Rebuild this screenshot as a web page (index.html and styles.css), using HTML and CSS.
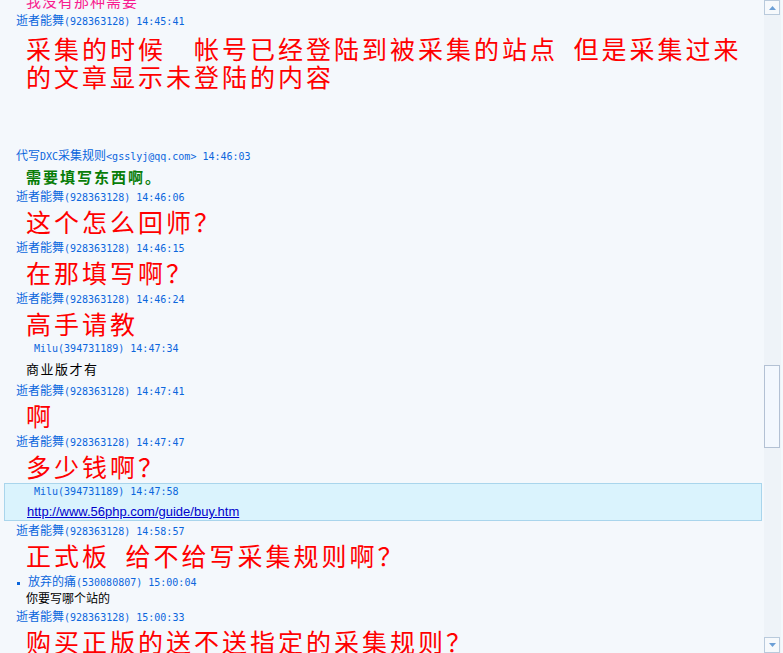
FILE: index.html
```html
<!DOCTYPE html>
<html lang="zh-CN">
  <head>
    <meta charset="UTF-8" />
    <meta name="viewport" content="width=device-width, initial-scale=1.0" />
    <title>聊天记录</title>
    <link rel="stylesheet" href="styles.css">
  </head>
  <body>
    <div class="window">
      <div class="chat">
        <p class="msg pink">我没有那种需要</p>
        <div class="hd"><span class="cn">逝者能舞</span>(928363128) 14:45:41</div>
        <p class="msg big first">采集的时候　帐号已经登陆到被采集的站点&ensp;但是采集过来的文章显示未登陆的内容</p>

        <div class="hd"><span class="cn">代写</span>DXC<span class="cn">采集规则</span>&lt;gsslyj@qq.com&gt; 14:46:03</div>
        <p class="msg green">需要填写东西啊。</p>

        <div class="hd"><span class="cn">逝者能舞</span>(928363128) 14:46:06</div>
        <p class="msg big">这个怎么回师？</p>

        <div class="hd"><span class="cn">逝者能舞</span>(928363128) 14:46:15</div>
        <p class="msg big">在那填写啊？</p>

        <div class="hd"><span class="cn">逝者能舞</span>(928363128) 14:46:24</div>
        <p class="msg big">高手请教</p>

        <div class="hd milu">Milu(394731189) 14:47:34</div>
        <p class="msg black">商业版才有</p>

        <div class="hd"><span class="cn">逝者能舞</span>(928363128) 14:47:41</div>
        <p class="msg big">啊</p>

        <div class="hd"><span class="cn">逝者能舞</span>(928363128) 14:47:47</div>
        <p class="msg big">多少钱啊？</p>

        <div class="quote">
          <div class="hd">Milu(394731189) 14:47:58</div>
          <a class="link" href="#">http://www.56php.com/guide/buy.htm</a>
        </div>

        <div class="hd"><span class="cn">逝者能舞</span>(928363128) 14:58:57</div>
        <p class="msg big">正式板&ensp;给不给写采集规则啊？</p>

        <div class="hd mark"><span class="cn">放弃的痛</span>(530080807) 15:00:04</div>
        <p class="msg plain">你要写哪个站的</p>

        <div class="hd"><span class="cn">逝者能舞</span>(928363128) 15:00:33</div>
        <p class="msg big">购买正版的送不送指定的采集规则？</p>
      </div>

      <div class="scrollbar">
        <div class="sb-btn">
          <svg width="7" height="4" viewBox="0 0 7 4"><path d="M3.5 0 L7 4 L0 4 Z" fill="#6c9fd6"/></svg>
        </div>
        <div class="sb-track">
          <div class="sb-thumb"></div>
        </div>
        <div class="sb-btn down">
          <svg width="7" height="4" viewBox="0 0 7 4"><path d="M0 0 L7 0 L3.5 4 Z" fill="#6c9fd6"/></svg>
        </div>
      </div>
    </div>
  </body>
</html>
```

FILE: styles.css
```css
* {
  margin: 0;
  padding: 0;
  box-sizing: border-box;
}

body {
  background: #f4f8fc;
  font-family: "Noto Sans CJK SC", sans-serif;
  overflow: hidden;
}

.window {
  display: flex;
  height: 653px;
  overflow: hidden;
}

.chat {
  flex: 1;
  min-width: 0;
  overflow: hidden;
}

/* sender line */
.hd {
  height: 17px;
  line-height: 17px;
  padding-left: 16px;
  color: #0b66dc;
  font-family: "DejaVu Sans Mono", "Noto Sans CJK SC", monospace;
  font-size: 10px;
  white-space: nowrap;
}

.hd .cn {
  font-family: "Noto Sans CJK SC", sans-serif;
  font-size: 12px;
}

.hd.milu {
  padding-left: 34px;
}

.hd.mark {
  padding-left: 17px;
}

.hd.mark::before {
  content: "";
  display: inline-block;
  width: 3px;
  height: 3px;
  background: #0b66dc;
  margin-right: 8px;
  vertical-align: middle;
}

/* message bodies */
.msg {
  padding-left: 26px;
  padding-right: 10px;
}

.pink {
  margin-top: -10px;
  height: 21px;
  line-height: 21px;
  font-size: 15px;
  letter-spacing: 1px;
  color: #f81d8f;
}

.big {
  font-size: 25px;
  letter-spacing: 3px;
  line-height: 28px;
  color: #ff0000;
  padding-top: 3px;
  padding-bottom: 3px;
}

.big.first {
  padding-top: 6px;
  padding-bottom: 56px;
}

.green {
  font-size: 15px;
  font-weight: bold;
  letter-spacing: 2px;
  line-height: 20px;
  color: #087d08;
  padding-top: 4px;
}

.black {
  font-size: 13px;
  letter-spacing: 1.5px;
  line-height: 18px;
  color: #000;
  padding-top: 3px;
  padding-bottom: 3px;
}

.plain {
  font-size: 12px;
  line-height: 18px;
  color: #000;
}

/* highlighted message */
.quote {
  margin: 0 2px 0 4px;
  background: #daf3fd;
  border: 1px solid #a9d5ec;
  height: 38px;
}

.quote .hd {
  height: 15px;
  line-height: 15px;
  padding-left: 29px;
}

.quote .link {
  display: block;
  margin-top: 5px;
  padding-left: 22px;
  height: 16px;
  line-height: 16px;
  font-family: "Liberation Sans", Arial, sans-serif;
  font-size: 13px;
  color: #0000cc;
}

/* scrollbar */
.scrollbar {
  width: 17px;
  margin-right: 2px;
  display: flex;
  flex-direction: column;
  background: #eef3f8;
}

.sb-btn {
  width: 16px;
  height: 15px;
  border: 1px solid #b9cadc;
  background: #f6f9fc;
  display: flex;
  align-items: center;
  justify-content: center;
}

.sb-btn.down {
  height: 16px;
}

.sb-track {
  flex: 1;
}

.sb-thumb {
  width: 16px;
  height: 83px;
  margin-top: 350px;
  border: 1px solid #b3c1d4;
  background: #f3f8fe;
}
```
